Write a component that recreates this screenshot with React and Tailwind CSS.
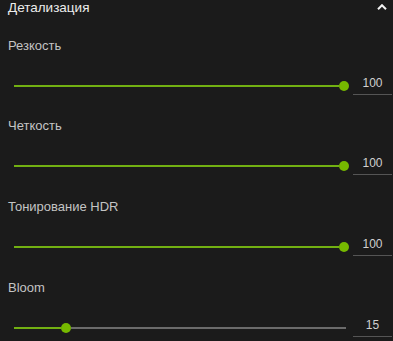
import React from "react";

const sliders = [
  { label: "Резкость", value: 100 },
  { label: "Четкость", value: 100 },
  { label: "Тонирование HDR", value: 100 },
  { label: "Bloom", value: 15 },
];

function Slider({ value }) {
  // заполненная часть до центра ползунка
  const filled = 2.6 + (value / 100) * 327 - 5;
  return (
    <div className="flex h-5 items-start pl-[14px] pr-[1px]">
      <div className="flex h-5 w-[332px] items-center">
        <div className="h-[2px] shrink-0 bg-[#72b012]" style={{ width: `${filled}px` }} />
        <div className="h-[10px] w-[10px] shrink-0 rounded-full bg-[#76b900]" />
        <div className="h-[2px] flex-1 bg-[#6b6b6b]" />
      </div>
      <div className="ml-[7px] h-[19px] w-[39px] border-b border-[#555] text-center text-[12px] leading-[14px] text-[#d0d0d0]">
        {value}
      </div>
    </div>
  );
}

export default function App() {
  return (
    <div
      className="h-[341px] w-[393px] overflow-hidden bg-[#1b1b1b]"
      style={{ fontFamily: '"Liberation Sans", Arial, sans-serif' }}
    >
      {/* Заголовок секции */}
      <div className="flex h-4 items-center justify-between pl-2 pr-[6px]">
        <span className="text-[13.5px] leading-4 text-[#ececec]">Детализация</span>
        <svg width="10" height="6" viewBox="0 0 10 6" className="mt-[-2px]">
          <polyline
            points="1,5.2 5,1.2 9,5.2"
            fill="none"
            stroke="#f2f2f2"
            strokeWidth="2"
          />
        </svg>
      </div>
      <div className="flex flex-col pt-[21.5px]">
        {sliders.map((s) => (
          <div key={s.label} className="flex h-[80.7px] flex-col gap-[22px]">
            <div className="pl-2 text-[13px] leading-4 text-[#c4c4c4]">{s.label}</div>
            <Slider value={s.value} />
          </div>
        ))}
      </div>
    </div>
  );
}
